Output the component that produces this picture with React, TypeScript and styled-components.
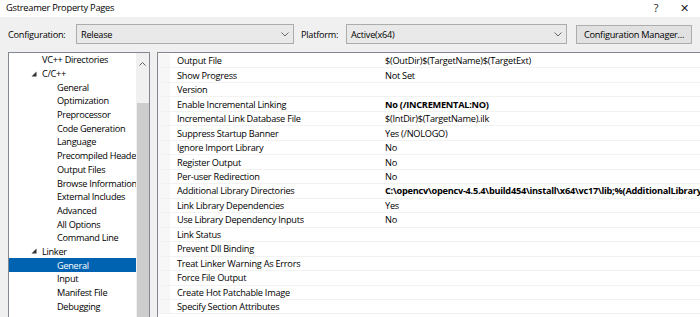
import React from "react";
import styled, { createGlobalStyle } from "styled-components";

const Global = createGlobalStyle`
  html, body { margin: 0; padding: 0; background: #ffffff; }
  body { font-family: "Open Sans", "Noto Sans", sans-serif; }
  #root { width: 700px; height: 317px; overflow: hidden; }
`;

const Window = styled.div`
  width: 700px;
  height: 317px;
  display: flex;
  flex-direction: column;
  font-size: 9.2px;
  letter-spacing: -0.25px;
  color: #000;
  overflow: hidden;
`;

const TitleBar = styled.div`
  height: 17px;
  flex: 0 0 17px;
  background: #ffffff;
  display: flex;
  align-items: center;
  padding-left: 6px;
  padding-bottom: 3px;
  box-sizing: border-box;
  font-size: 9.3px;
`;

const TitleText = styled.span`
  flex: 1;
`;

const TitleButton = styled.span<{ $w: number }>`
  width: ${(p) => p.$w}px;
  text-align: center;
  color: #222;
  font-size: 11px;
`;

const Body = styled.div`
  flex: 1;
  background: #f0f0f0;
  display: flex;
  flex-direction: column;
  padding: 7px 0 0 8px;
  min-height: 0;
`;

const ConfigRow = styled.div`
  height: 20px;
  display: flex;
  align-items: center;
`;

const Label = styled.span<{ $w: number }>`
  width: ${(p) => p.$w}px;
  flex: 0 0 ${(p) => p.$w}px;
`;

const Combo = styled.div<{ $w: number }>`
  width: ${(p) => p.$w}px;
  height: 20px;
  box-sizing: border-box;
  border: 1px solid #acacac;
  background: #e9e9e9;
  display: flex;
  align-items: center;
  padding-left: 4px;
  margin-right: 7px;
`;

const ComboText = styled.span`
  flex: 1;
`;

const Chevron = styled.svg`
  width: 8px;
  height: 5px;
  margin-right: 4px;
`;

const Button = styled.div`
  width: 116px;
  height: 19px;
  box-sizing: border-box;
  border: 1px solid #adadad;
  background: #e1e1e1;
  display: flex;
  align-items: center;
  justify-content: center;
  margin-left: 2px;
`;

const Panels = styled.div`
  flex: 1;
  display: flex;
  margin-top: 8px;
  gap: 7px;
  min-height: 0;
`;

const TreePanel = styled.div`
  width: 142px;
  flex: 0 0 142px;
  box-sizing: border-box;
  border: 1px solid #828790;
  border-bottom: none;
  background: #fff;
  display: flex;
  overflow: hidden;
`;

const TreeList = styled.div`
  flex: 1;
  display: flex;
  flex-direction: column;
  min-width: 0;
  letter-spacing: -0.3px;
`;

const TreeRow = styled.div<{ $level: number; $selected?: boolean }>`
  height: 13.7px;
  flex: 0 0 13.7px;
  display: flex;
  align-items: center;
  padding-left: ${(p) => (p.$level === 0 ? 22 : 48)}px;
  white-space: nowrap;
  overflow: hidden;
  background: ${(p) => (p.$selected ? "#0063b1" : "transparent")};
  color: ${(p) => (p.$selected ? "#fff" : "#000")};
`;

const Expander = styled.svg`
  width: 6px;
  height: 6px;
  margin-right: 5px;
`;

const Spacer = styled.span`
  width: 11px;
  flex: 0 0 11px;
`;

const ScrollBar = styled.div`
  width: 13px;
  flex: 0 0 13px;
  background: #f0f0f0;
  display: flex;
  flex-direction: column;
  align-items: center;
`;

const ScrollArrow = styled.svg`
  width: 7px;
  height: 4px;
  margin-top: 9px;
`;

const Thumb = styled.div`
  width: 12px;
  flex: 1;
  margin-top: 37px;
  background: #cdcdcd;
`;

const GridPanel = styled.div`
  flex: 1;
  box-sizing: border-box;
  border: 1px solid #828790;
  border-right: none;
  border-bottom: none;
  background: #fff;
  display: flex;
  flex-direction: column;
  padding-top: 1px;
  overflow: hidden;
`;

const GridRow = styled.div`
  height: 14.47px;
  flex: 0 0 14.47px;
  display: flex;
  align-items: center;
  box-sizing: border-box;
  border-bottom: 1px solid #f2f2f2;
`;

const Gutter = styled.div`
  width: 12px;
  align-self: stretch;
  background: #f7f7f7;
`;

const NameCell = styled.div`
  width: 208px;
  padding-left: 7px;
  white-space: nowrap;
  overflow: hidden;
`;

const ValueCell = styled.div<{ $bold?: boolean }>`
  flex: 1;
  white-space: nowrap;
  overflow: hidden;
  font-weight: ${(p) => (p.$bold ? 700 : 400)};
`;

const tree: { label: string; level: number; expander?: boolean; selected?: boolean }[] = [
  { label: "VC++ Directories", level: 0 },
  { label: "C/C++", level: 0, expander: true },
  { label: "General", level: 1 },
  { label: "Optimization", level: 1 },
  { label: "Preprocessor", level: 1 },
  { label: "Code Generation", level: 1 },
  { label: "Language", level: 1 },
  { label: "Precompiled Headers", level: 1 },
  { label: "Output Files", level: 1 },
  { label: "Browse Information", level: 1 },
  { label: "External Includes", level: 1 },
  { label: "Advanced", level: 1 },
  { label: "All Options", level: 1 },
  { label: "Command Line", level: 1 },
  { label: "Linker", level: 0, expander: true },
  { label: "General", level: 1, selected: true },
  { label: "Input", level: 1 },
  { label: "Manifest File", level: 1 },
  { label: "Debugging", level: 1 },
];

const props: { name: string; value: string; bold?: boolean }[] = [
  { name: "Output File", value: "$(OutDir)$(TargetName)$(TargetExt)" },
  { name: "Show Progress", value: "Not Set" },
  { name: "Version", value: "" },
  { name: "Enable Incremental Linking", value: "No (/INCREMENTAL:NO)", bold: true },
  { name: "Incremental Link Database File", value: "$(IntDir)$(TargetName).ilk" },
  { name: "Suppress Startup Banner", value: "Yes (/NOLOGO)" },
  { name: "Ignore Import Library", value: "No" },
  { name: "Register Output", value: "No" },
  { name: "Per-user Redirection", value: "No" },
  {
    name: "Additional Library Directories",
    value: "C:\\opencv\\opencv-4.5.4\\build454\\install\\x64\\vc17\\lib;%(AdditionalLibraryDirectories)",
    bold: true,
  },
  { name: "Link Library Dependencies", value: "Yes" },
  { name: "Use Library Dependency Inputs", value: "No" },
  { name: "Link Status", value: "" },
  { name: "Prevent Dll Binding", value: "" },
  { name: "Treat Linker Warning As Errors", value: "" },
  { name: "Force File Output", value: "" },
  { name: "Create Hot Patchable Image", value: "" },
  { name: "Specify Section Attributes", value: "" },
];

const Down = () => (
  <Chevron viewBox="0 0 8 5">
    <path d="M0.5 0.5 L4 4 L7.5 0.5" fill="none" stroke="#666" strokeWidth="1" />
  </Chevron>
);

export default function App() {
  return (
    <>
      <Global />
      <Window>
        <TitleBar>
          <TitleText>Gstreamer Property Pages</TitleText>
          <TitleButton $w={20}>?</TitleButton>
          <TitleButton $w={8} />
          <TitleButton $w={20}>✕</TitleButton>
          <TitleButton $w={6} />
        </TitleBar>
        <Body>
          <ConfigRow>
            <Label $w={68}>Configuration:</Label>
            <Combo $w={218}>
              <ComboText>Release</ComboText>
              <Down />
            </Combo>
            <Label $w={45}>Platform:</Label>
            <Combo $w={221}>
              <ComboText>Active(x64)</ComboText>
              <Down />
            </Combo>
            <Button>Configuration Manager...</Button>
          </ConfigRow>
          <Panels>
            <TreePanel>
              <TreeList>
                {tree.map((t, i) => (
                  <TreeRow key={i} $level={t.level} $selected={t.selected}>
                    {t.level === 0 &&
                      (t.expander ? (
                        <Expander viewBox="0 0 6 6">
                          <polygon points="5.5,0.5 5.5,5.5 0.5,5.5" fill="#333" />
                        </Expander>
                      ) : (
                        <Spacer />
                      ))}
                    {t.label}
                  </TreeRow>
                ))}
              </TreeList>
              <ScrollBar>
                <ScrollArrow viewBox="0 0 7 4">
                  <path d="M0.5 3.5 L3.5 0.5 L6.5 3.5" fill="none" stroke="#606060" strokeWidth="1" />
                </ScrollArrow>
                <Thumb />
              </ScrollBar>
            </TreePanel>
            <GridPanel>
              {props.map((p, i) => (
                <GridRow key={i}>
                  <Gutter />
                  <NameCell>{p.name}</NameCell>
                  <ValueCell $bold={p.bold}>{p.value}</ValueCell>
                </GridRow>
              ))}
            </GridPanel>
          </Panels>
        </Body>
      </Window>
    </>
  );
}
